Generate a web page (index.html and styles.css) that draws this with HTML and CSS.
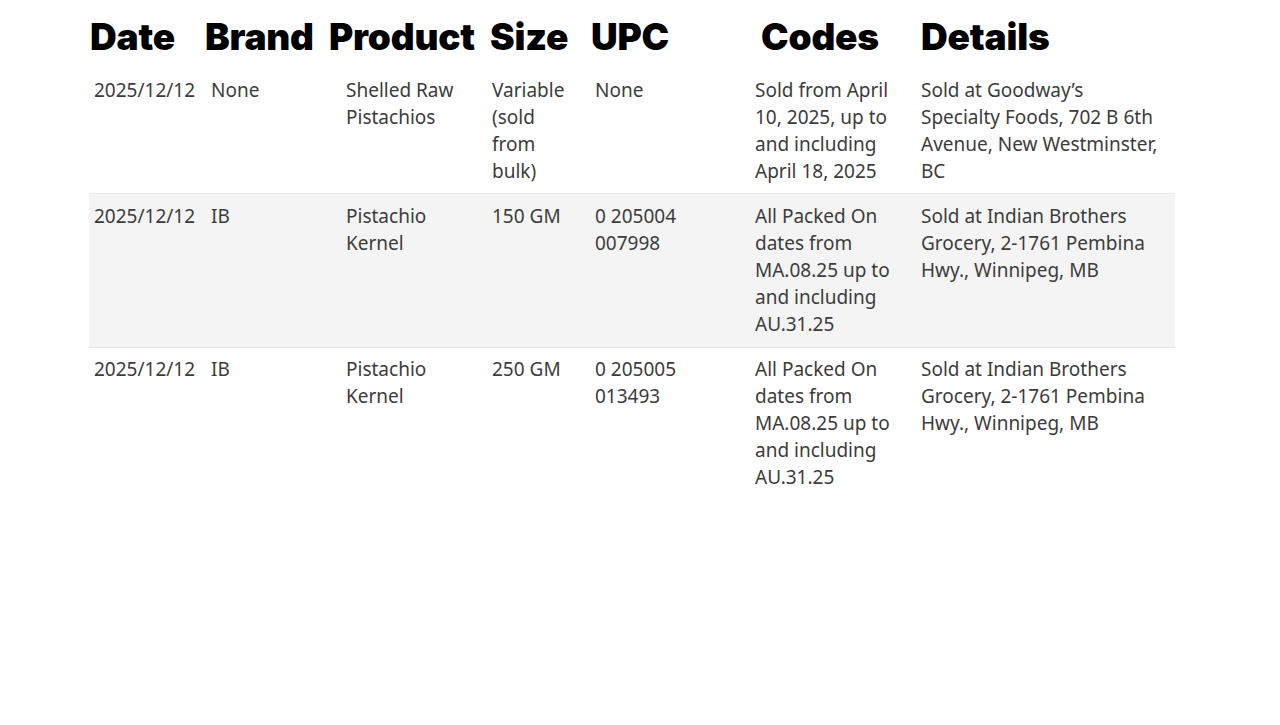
FILE: index.html
```html
<!DOCTYPE html>
<html>
<head>
<meta charset="utf-8">
<link rel="stylesheet" href="styles.css">
</head>
<body>
<div class="page">
  <div class="head">
    <span class="h h-date">Date</span>
    <span class="h h-brand">Brand</span>
    <span class="h h-product">Product</span>
    <span class="h h-size">Size</span>
    <span class="h h-upc">UPC</span>
    <span class="h h-codes">Codes</span>
    <span class="h h-details">Details</span>
  </div>
  <table class="recalls">
    <colgroup>
      <col class="c1"><col class="c2"><col class="c3"><col class="c4"><col class="c5"><col class="c6"><col class="c7">
    </colgroup>
    <tbody>
      <tr>
        <td>2025/12/12</td>
        <td>None</td>
        <td>Shelled Raw Pistachios</td>
        <td>Variable (sold from bulk)</td>
        <td>None</td>
        <td>Sold from April 10, 2025, up to and including April 18, 2025</td>
        <td>Sold at Goodway’s Specialty Foods, 702 B 6th Avenue, New Westminster, BC</td>
      </tr>
      <tr class="alt">
        <td>2025/12/12</td>
        <td>IB</td>
        <td>Pistachio Kernel</td>
        <td>150 GM</td>
        <td>0 205004 007998</td>
        <td>All Packed On dates from MA.08.25 up to and including AU.31.25</td>
        <td>Sold at Indian Brothers Grocery, 2-1761 Pembina Hwy., Winnipeg, MB</td>
      </tr>
      <tr class="last">
        <td>2025/12/12</td>
        <td>IB</td>
        <td>Pistachio Kernel</td>
        <td>250 GM</td>
        <td>0 205005 013493</td>
        <td>All Packed On dates from MA.08.25 up to and including AU.31.25</td>
        <td>Sold at Indian Brothers Grocery, 2-1761 Pembina Hwy., Winnipeg, MB</td>
      </tr>
    </tbody>
  </table>
</div>
</body>
</html>
```

FILE: styles.css
```css
html, body {
  margin: 0;
  padding: 0;
  background: #ffffff;
}

.page {
  width: 1086px;
  margin-left: 89px;
  padding-top: 7px;
}

.head {
  display: flex;
  height: 61px;
  align-items: center;
  font-family: Inter, "Liberation Sans", sans-serif;
  font-weight: 900;
  font-size: 37px;
  color: #000;
  letter-spacing: -0.2px;
  line-height: 1;
  padding-bottom: 3px;
  box-sizing: border-box;
}

.h { display: block; white-space: nowrap; }
.h-date { margin-left: 1px; width: 115px; }
.h-brand { width: 124px; }
.h-product { width: 161px; }
.h-size { width: 101px; }
.h-upc { width: 170px; }
.h-codes { width: 160px; }

.recalls {
  width: 1086px;
  border-collapse: collapse;
  table-layout: fixed;
  font-family: "Noto Sans", "Open Sans", sans-serif;
  font-size: 19px;
  line-height: 27px;
  color: #3c3c3c;
}

.c1 { width: 117px; }
.c2 { width: 135px; }
.c3 { width: 146px; }
.c4 { width: 103px; }
.c5 { width: 160px; }
.c6 { width: 166px; }
.c7 { width: 259px; }

.recalls td {
  vertical-align: top;
  padding: 9px 12px 8px 5px;
  text-align: left;
}

.recalls tr.alt td {
  padding-bottom: 9px;
}

.recalls tr.last td {
  padding-top: 8px;
}

.recalls tr + tr td {
  border-top: 1px solid #e6e6e6;
}

.recalls tr.alt td {
  background: #f4f4f4;
}
```
